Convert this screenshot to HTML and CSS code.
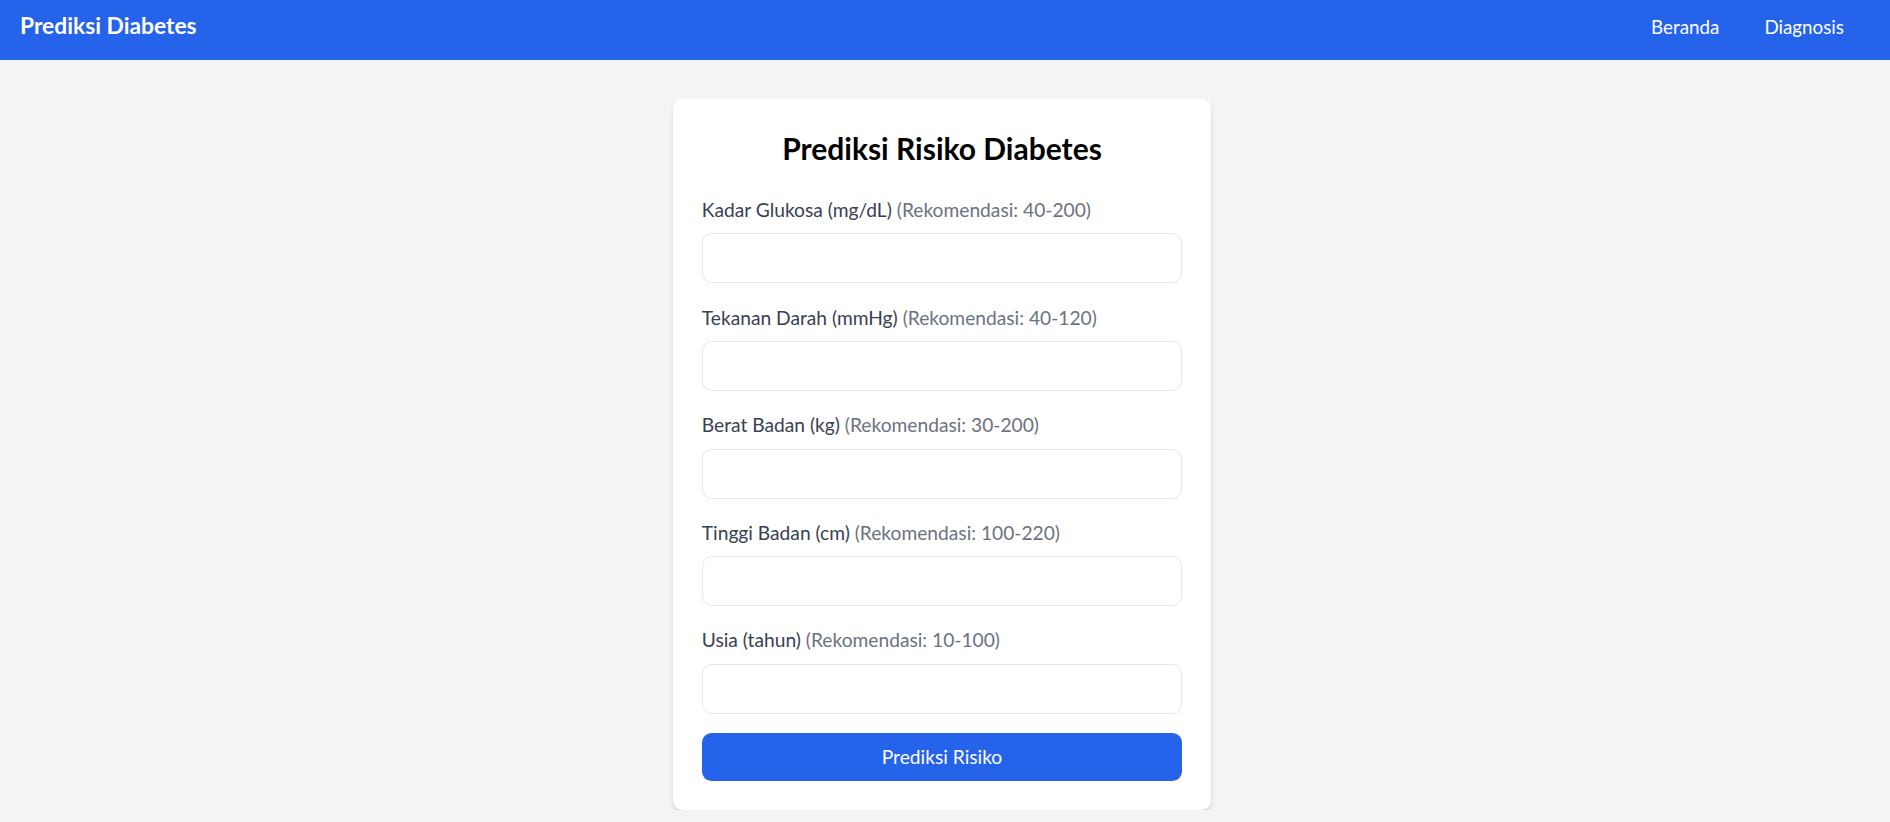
FILE: index.html
```html
<!DOCTYPE html>
<html lang="id">
<head>
<meta charset="utf-8">
<title>Prediksi Diabetes</title>
<link rel="stylesheet" href="styles.css">
</head>
<body>
<nav class="navbar">
  <a class="brand" href="#">Prediksi Diabetes</a>
  <div class="nav-links">
    <a href="#">Beranda</a>
    <a href="#">Diagnosis</a>
  </div>
</nav>
<main class="main">
  <form class="card">
    <h1 class="card-title">Prediksi Risiko Diabetes</h1>
    <div class="field">
      <label class="label">Kadar Glukosa (mg/dL) <span class="hint">(Rekomendasi: 40-200)</span></label>
      <input class="input" type="number">
    </div>
    <div class="field">
      <label class="label">Tekanan Darah (mmHg) <span class="hint">(Rekomendasi: 40-120)</span></label>
      <input class="input" type="number">
    </div>
    <div class="field">
      <label class="label">Berat Badan (kg) <span class="hint">(Rekomendasi: 30-200)</span></label>
      <input class="input" type="number">
    </div>
    <div class="field">
      <label class="label">Tinggi Badan (cm) <span class="hint">(Rekomendasi: 100-220)</span></label>
      <input class="input" type="number">
    </div>
    <div class="field">
      <label class="label">Usia (tahun) <span class="hint">(Rekomendasi: 10-100)</span></label>
      <input class="input" type="number">
    </div>
    <button class="button" type="button">Prediksi Risiko</button>
  </form>
</main>
</body>
</html>
```
FILE: styles.css
```css
* { box-sizing: border-box; }
html, body { margin: 0; padding: 0; }
body {
  background: #f3f4f6;
  font-family: "Lato", "Noto Sans", sans-serif;
  color: #374151;
}
a { text-decoration: none; color: inherit; }

.navbar {
  height: 60px;
  background: #2563eb;
  color: #ffffff;
  display: flex;
  align-items: baseline;
  justify-content: space-between;
  padding: 11px 46px 0 20px;
}
.brand {
  font-size: 22.8px;
  font-weight: 700;
  line-height: 28px;
}
.nav-links {
  display: flex;
  align-items: baseline;
  gap: 45px;
  font-size: 18.8px;
  line-height: 28px;
}

.main {
  display: flex;
  justify-content: center;
  padding: 39px 6px 0 0;
}
.card {
  width: 538px;
  background: #ffffff;
  border-radius: 9.6px;
  padding: 28.8px;
  box-shadow: 0 4.8px 7.2px -1.2px rgba(0,0,0,0.1), 0 2.4px 4.8px -2.4px rgba(0,0,0,0.1);
}
.card-title {
  margin: 0 0 27.8px;
  padding-top: 1px;
  text-align: center;
  font-size: 30px;
  line-height: 38.4px;
  font-weight: 700;
  color: #000000;
}
.field {
  margin-bottom: 19.2px;
}
.label {
  display: block;
  font-size: 19.2px;
  line-height: 28.8px;
  padding-top: 1px;
  margin-bottom: 8.6px;
  color: #374151;
}
.hint {
  color: #6b7280;
}
.input {
  display: block;
  width: 100%;
  height: 50px;
  border: 1px solid #e5e7eb;
  border-radius: 9.6px;
  background: #ffffff;
  padding: 9.6px;
  font: inherit;
  font-size: 19.2px;
  outline: none;
}
.button {
  display: block;
  width: 100%;
  height: 48px;
  border: none;
  border-radius: 9.6px;
  background: #2563eb;
  color: #ffffff;
  font-family: inherit;
  font-size: 19.2px;
  line-height: 28.8px;
  padding: 2px 0 0;
  cursor: pointer;
}
```
